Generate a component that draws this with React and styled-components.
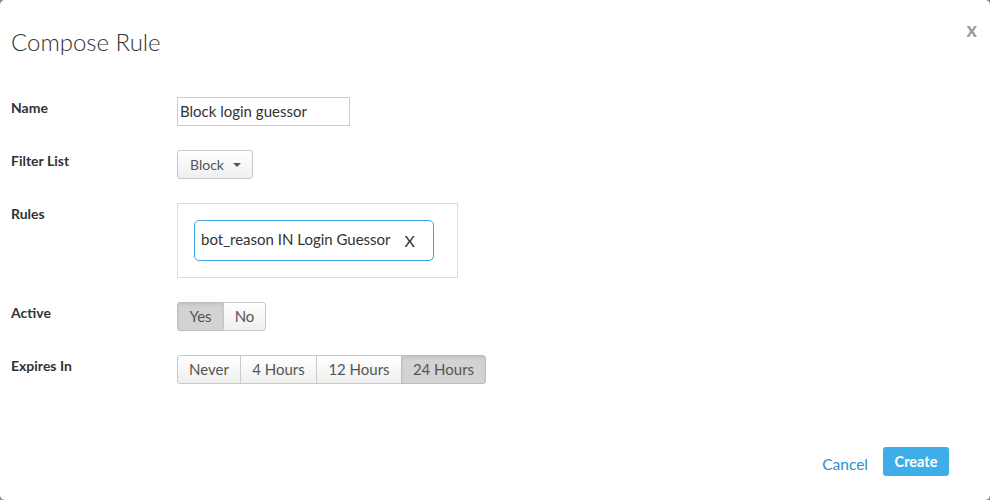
import React from "react";
import styled, { createGlobalStyle, css } from "styled-components";

const Global = createGlobalStyle`
  html, body { margin: 0; padding: 0; background: #8a8a8a; }
  body { font-family: Lato, "Open Sans", sans-serif; color: #333; }
  * { box-sizing: border-box; }
`;

const Modal = styled.div`
  width: 990px;
  height: 500px;
  background: #fff;
  border-radius: 5px;
  position: relative;
  display: flex;
  flex-direction: column;
  overflow: hidden;
`;

const Header = styled.div`
  padding: 29px 11px 0;
  height: 97px;
`;

const Title = styled.h1`
  margin: 0;
  font-family: Lato, sans-serif;
  font-weight: 300;
  font-size: 24px;
  line-height: 1.1;
  color: #333;
`;

const Close = styled.button`
  position: absolute;
  top: 18px;
  right: 13px;
  border: 0;
  background: none;
  padding: 0;
  font-family: Lato, sans-serif;
  font-weight: 700;
  font-size: 20px;
  line-height: 22px;
  color: #9a9a9a;
  cursor: pointer;
`;

const Form = styled.div`
  display: grid;
  grid-template-columns: 166px auto;
  row-gap: 24px;
  padding: 0 11px;
  align-items: start;
  justify-items: start;
`;

const Label = styled.div`
  font-weight: 700;
  font-size: 14px;
  line-height: 20px;
  padding-top: 1px;
  color: #333;
`;

const TextInput = styled.div`
  width: 173px;
  height: 29px;
  border: 1px solid #ccc;
  padding: 0 2px;
  font-size: 15px;
  line-height: 27px;
  color: #333;
`;

const btnBase = css`
  height: 29px;
  border: 1px solid #c8c8c8;
  background: linear-gradient(#ffffff, #efefef);
  font-family: Lato, sans-serif;
  font-size: 15px;
  color: #555;
  padding: 0 11px 1px;
  display: flex;
  align-items: center;
  cursor: pointer;
`;

const Dropdown = styled.button`
  ${btnBase}
  width: 76px;
  border-radius: 3px;
  gap: 9px;
  padding: 0 12px;
  font-size: 14px;
`;

const Caret = styled.span`
  width: 0;
  height: 0;
  border-left: 4px solid transparent;
  border-right: 4px solid transparent;
  border-top: 4px solid #555;
  margin-top: 1px;
`;

const RulesBox = styled.div`
  width: 281px;
  height: 75px;
  border: 1px solid #ddd;
  padding: 16px;
`;

const Chip = styled.div`
  display: inline-flex;
  align-items: center;
  height: 41px;
  width: 240px;
  border: 1px solid #3aa6e3;
  border-radius: 5px;
  padding: 0 6px 4px;
  font-size: 15px;
  color: #333;
`;

const ChipClose = styled.span`
  margin-left: 14px;
  font-size: 16px;
  margin-top: 3px;
  color: #333;
`;

const Group = styled.div`
  display: flex;
  border-radius: 3px;
`;

const SegButton = styled.button`
  ${btnBase}
  width: ${(p) => p.$w}px;
  justify-content: center;
  padding: 0 0 1px;
  margin-left: -1px;
  &:first-child { margin-left: 0; border-radius: 3px 0 0 3px; }
  &:last-child { border-radius: 0 3px 3px 0; }
  ${(p) =>
    p.$active &&
    css`
      background: #d3d3d3;
      border-color: #bdbdbd;
      box-shadow: inset 0 2px 3px rgba(0, 0, 0, 0.08);
    `}
`;

const Footer = styled.div`
  margin-top: auto;
  display: flex;
  justify-content: flex-end;
  align-items: center;
  gap: 15px;
  padding: 0 41px 24px 0;
`;

const Cancel = styled.button`
  border: 0;
  background: none;
  padding: 0;
  margin-top: 5px;
  font-family: Lato, sans-serif;
  font-size: 15.5px;
  color: #2f8bd0;
  cursor: pointer;
`;

const Primary = styled.button`
  height: 29px;
  width: 66px;
  border: 0;
  border-radius: 3px;
  background: #3eaee8;
  color: #fff;
  font-family: Lato, sans-serif;
  font-weight: 700;
  font-size: 14.5px;
  padding-top: 1px;
  cursor: pointer;
`;

export default function App() {
  return (
    <>
      <Global />
      <Modal>
        <Close>x</Close>
        <Header>
          <Title>Compose Rule</Title>
        </Header>
        <Form>
          <Label>Name</Label>
          <TextInput>Block login guessor</TextInput>

          <Label>Filter List</Label>
          <Dropdown>
            Block <Caret />
          </Dropdown>

          <Label>Rules</Label>
          <RulesBox>
            <Chip>
              bot_reason IN Login Guessor<ChipClose>X</ChipClose>
            </Chip>
          </RulesBox>

          <Label>Active</Label>
          <Group>
            <SegButton $w={47} $active>Yes</SegButton>
            <SegButton $w={43}>No</SegButton>
          </Group>

          <Label>Expires In</Label>
          <Group>
            <SegButton $w={64}>Never</SegButton>
            <SegButton $w={77}>4 Hours</SegButton>
            <SegButton $w={86}>12 Hours</SegButton>
            <SegButton $w={85} $active>24 Hours</SegButton>
          </Group>
        </Form>
        <Footer>
          <Cancel>Cancel</Cancel>
          <Primary>Create</Primary>
        </Footer>
      </Modal>
    </>
  );
}
